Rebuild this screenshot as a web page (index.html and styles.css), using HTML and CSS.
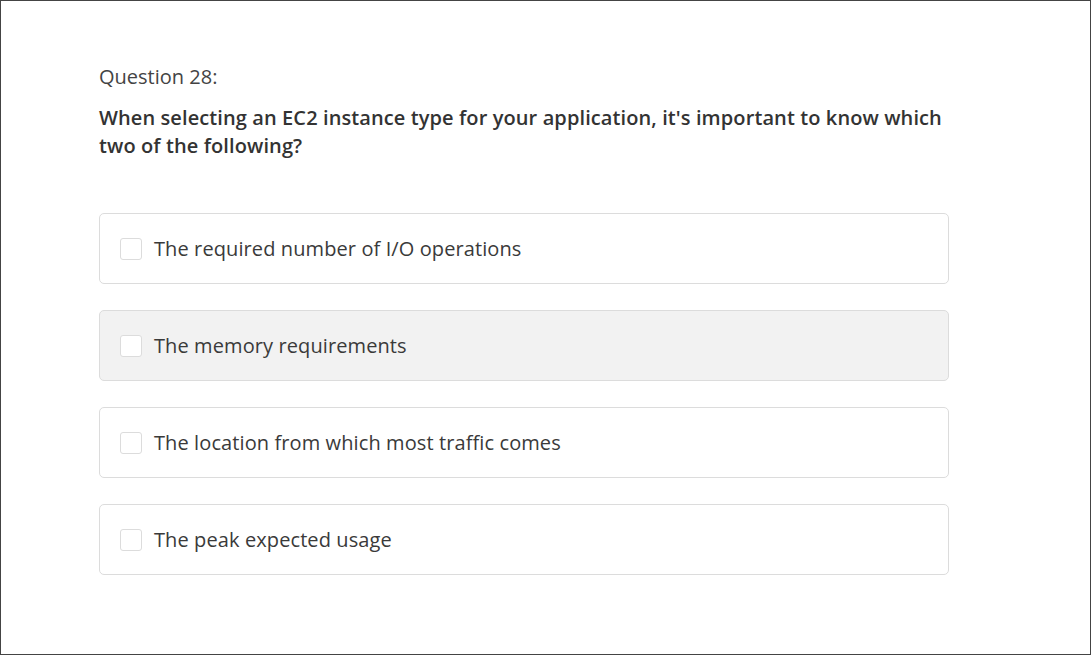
FILE: index.html
```html
<!DOCTYPE html>
<html>
<head>
<meta charset="utf-8">
<link rel="stylesheet" href="styles.css">
</head>
<body>
<div class="frame">
  <div class="quiz">
    <div class="label">Question 28:</div>
    <div class="prompt">When selecting an EC2 instance type for your application, it's important to know which two of the following?</div>
    <div class="options">
      <div class="option"><span class="box"></span><span class="text">The required number of I/O operations</span></div>
      <div class="option hover"><span class="box"></span><span class="text">The memory requirements</span></div>
      <div class="option"><span class="box"></span><span class="text">The location from which most traffic comes</span></div>
      <div class="option"><span class="box"></span><span class="text">The peak expected usage</span></div>
    </div>
  </div>
</div>
</body>
</html>
```

FILE: styles.css
```css
html, body {
  margin: 0;
  padding: 0;
  background: #fff;
}
.frame {
  width: 1091px;
  height: 655px;
  box-sizing: border-box;
  border: 1px solid #444;
  padding: 62px 0 0 98px;
  font-family: "Open Sans", "DejaVu Sans", sans-serif;
  color: #333;
}
.quiz {
  width: 850px;
}
.label {
  font-size: 20px;
  line-height: 28px;
  color: #444;
}
.prompt {
  margin-top: 13px;
  font-size: 20px;
  line-height: 28px;
  font-weight: 600;
  letter-spacing: 0.1px;
  color: #333;
  width: 860px;
}
.options {
  margin-top: 53px;
  display: flex;
  flex-direction: column;
  gap: 26px;
}
.option {
  height: 71px;
  box-sizing: border-box;
  border: 1px solid #dcdcdc;
  border-radius: 5px;
  display: flex;
  align-items: center;
  padding-left: 20px;
  background: #fff;
}
.option.hover {
  background: #f2f2f2;
}
.box {
  width: 22px;
  height: 22px;
  box-sizing: border-box;
  border: 1px solid #dcdcdc;
  border-radius: 3px;
  background: #fff;
  flex: none;
}
.text {
  margin-left: 12px;
  font-size: 20px;
  letter-spacing: 0.1px;
  color: #3a3a3a;
}
```
